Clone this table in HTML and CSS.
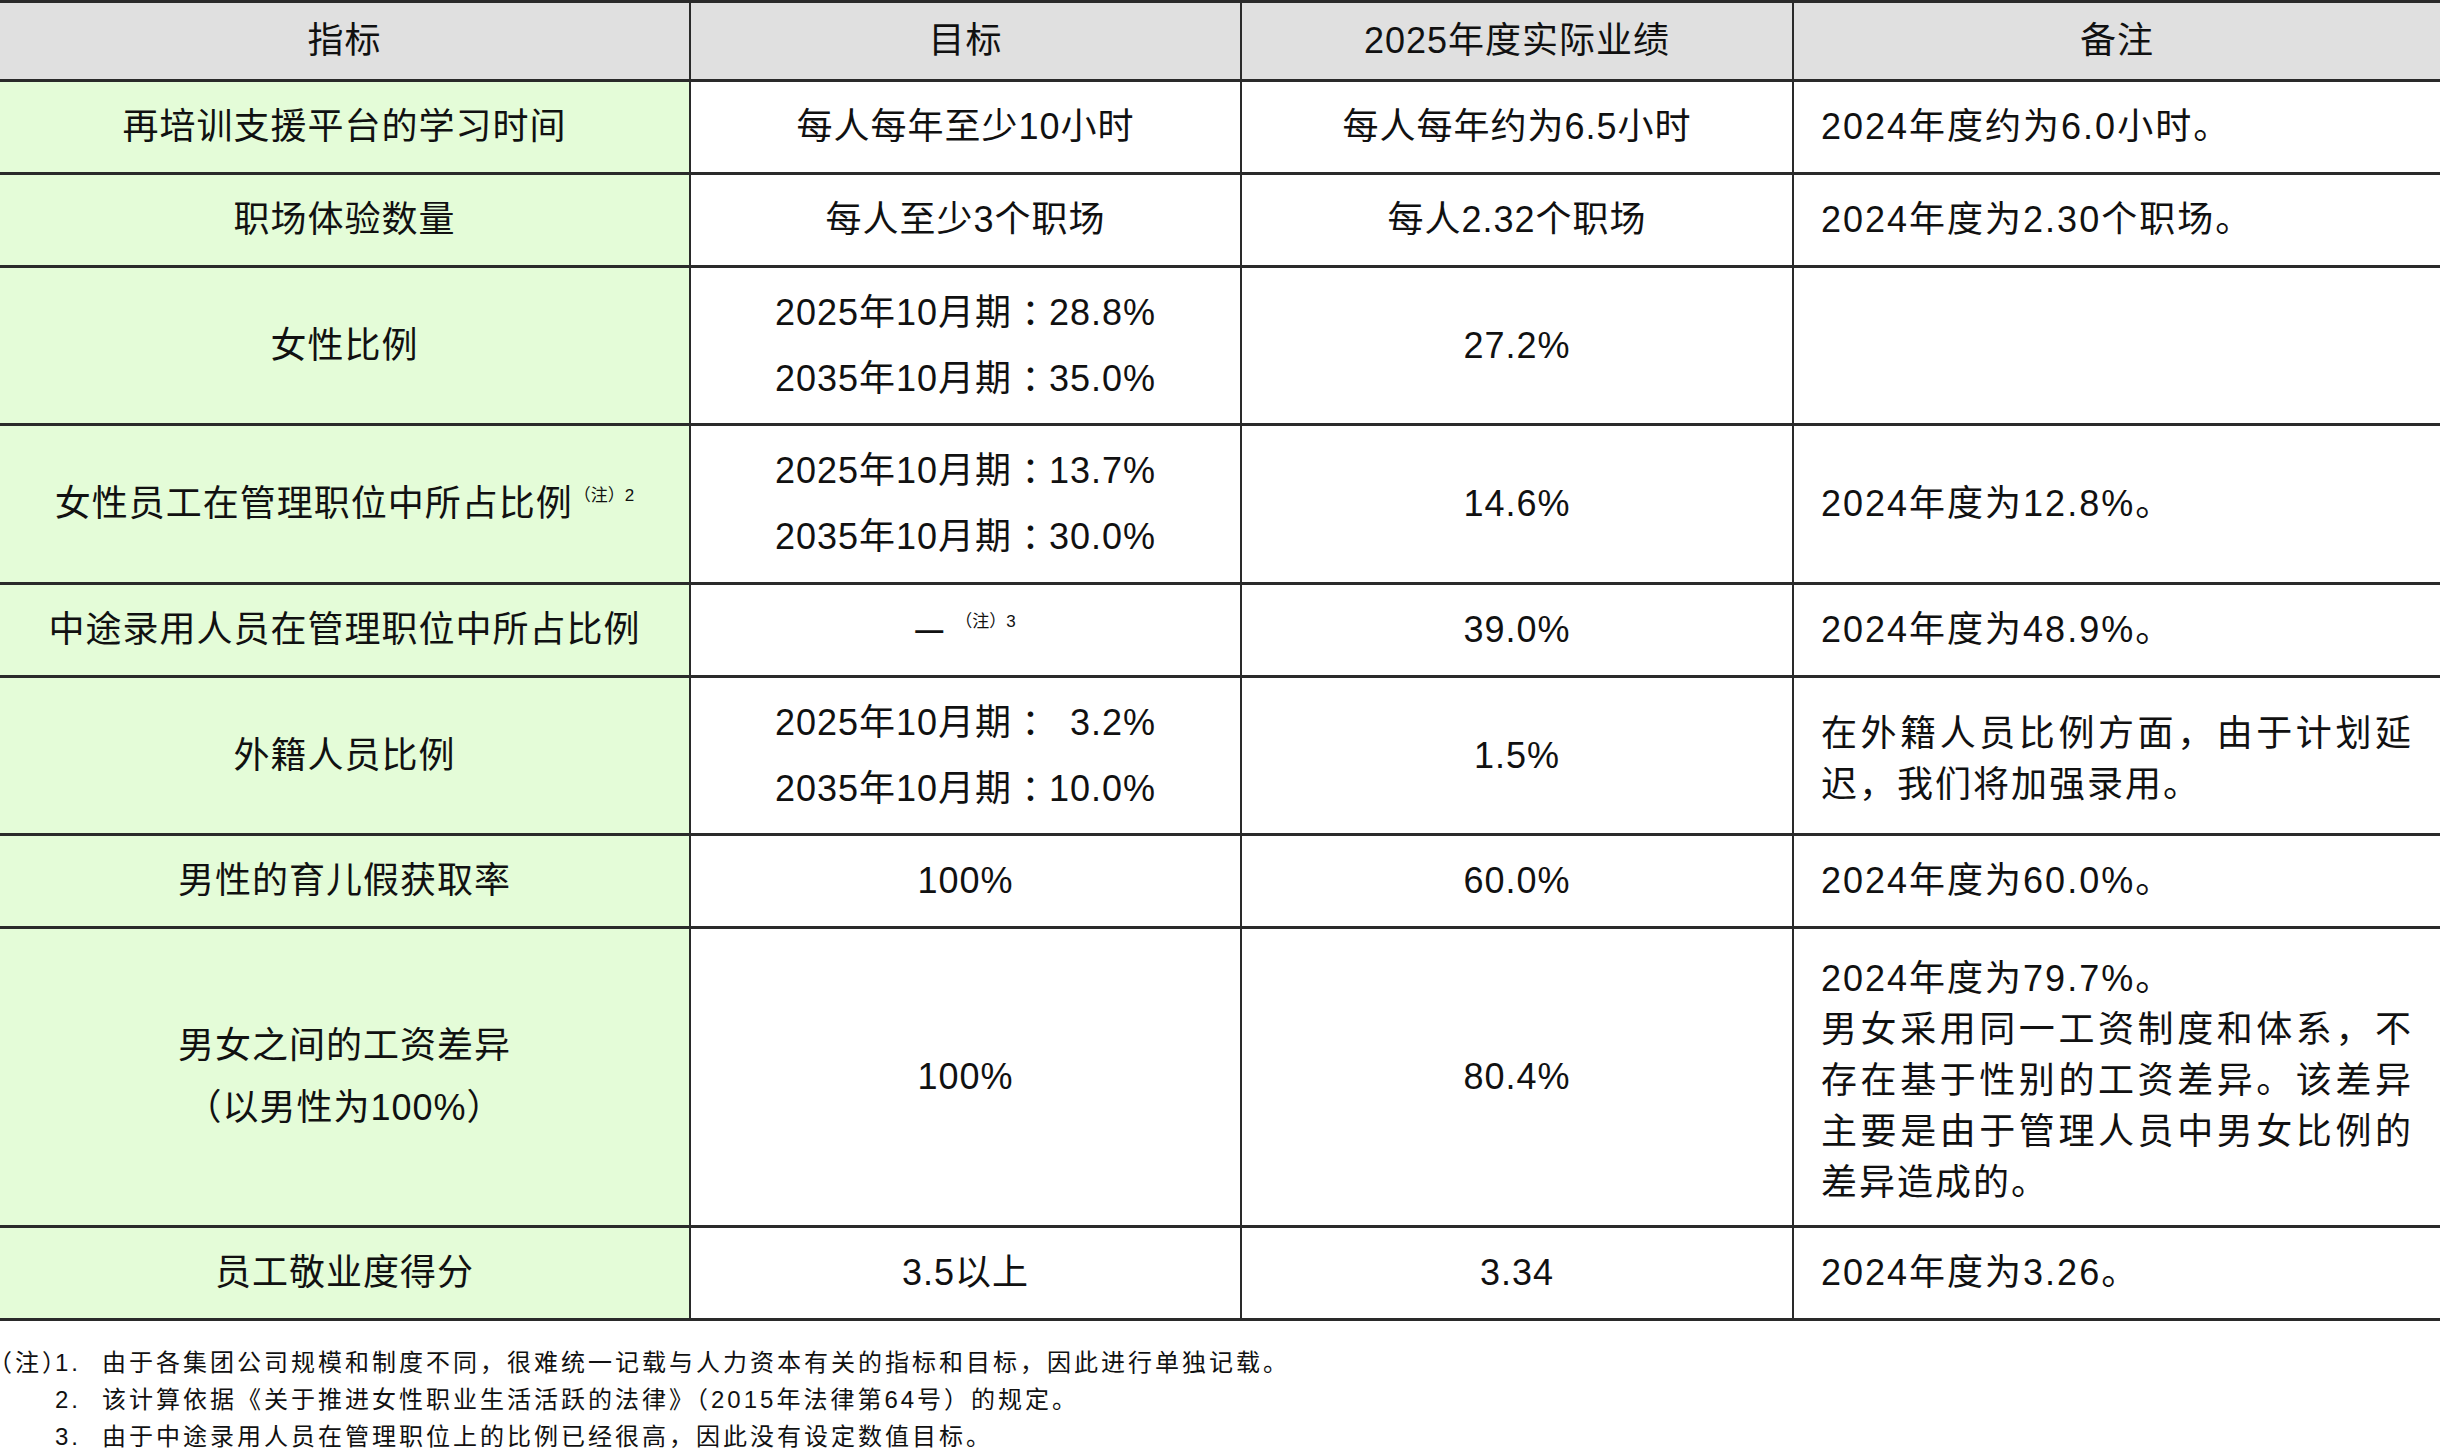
FILE: index.html
```html
<!DOCTYPE html>
<html lang="zh-CN">
<head>
<meta charset="utf-8">
<title>人力资本指标与目标</title>
<link rel="stylesheet" href="styles.css">
</head>
<body>
<div class="kpi-table">
  <div class="cell head">指标</div>
  <div class="cell head val">目标</div>
  <div class="cell head val">2025年度实际业绩</div>
  <div class="cell head val">备注</div>

  <div class="cell ind">再培训支援平台的学习时间</div>
  <div class="cell val">每人每年至少10小时</div>
  <div class="cell val">每人每年约为6.5小时</div>
  <div class="cell val note">2024年度约为6.0小时。</div>

  <div class="cell ind">职场体验数量</div>
  <div class="cell val">每人至少3个职场</div>
  <div class="cell val">每人2.32个职场</div>
  <div class="cell val note">2024年度为2.30个职场。</div>

  <div class="cell ind">女性比例</div>
  <div class="cell val">
    <div class="tline">2025年10月期<span class="colon">：</span>28.8%</div>
    <div class="tline">2035年10月期<span class="colon">：</span>35.0%</div>
  </div>
  <div class="cell val">27.2%</div>
  <div class="cell val note"></div>

  <div class="cell ind">
    <div>女性员工在管理职位中所占比例<span class="ref">（注）2</span></div>
  </div>
  <div class="cell val">
    <div class="tline">2025年10月期<span class="colon">：</span>13.7%</div>
    <div class="tline">2035年10月期<span class="colon">：</span>30.0%</div>
  </div>
  <div class="cell val">14.6%</div>
  <div class="cell val note">2024年度为12.8%。</div>

  <div class="cell ind">中途录用人员在管理职位中所占比例</div>
  <div class="cell val">
    <div><span class="dash">—</span><span class="ref gap">（注）3</span></div>
  </div>
  <div class="cell val">39.0%</div>
  <div class="cell val note">2024年度为48.9%。</div>

  <div class="cell ind">外籍人员比例</div>
  <div class="cell val">
    <div class="tline">2025年10月期<span class="colon">：</span><span class="fig"></span>3.2%</div>
    <div class="tline">2035年10月期<span class="colon">：</span>10.0%</div>
  </div>
  <div class="cell val">1.5%</div>
  <div class="cell val note multi">在外籍人员比例方面，由于计划延迟，我们将加强录用。</div>

  <div class="cell ind">男性的育儿假获取率</div>
  <div class="cell val">100%</div>
  <div class="cell val">60.0%</div>
  <div class="cell val note">2024年度为60.0%。</div>

  <div class="cell ind">
    <div class="iline">男女之间的工资差异</div>
    <div class="iline">（以男性为100%）</div>
  </div>
  <div class="cell val">100%</div>
  <div class="cell val">80.4%</div>
  <div class="cell val note multi">2024年度为79.7%。<br>男女采用同一工资制度和体系，不存在基于性别的工资差异。该差异主要是由于管理人员中男女比例的差异造成的。</div>

  <div class="cell ind">员工敬业度得分</div>
  <div class="cell val">3.5以上</div>
  <div class="cell val">3.34</div>
  <div class="cell val note">2024年度为3.26。</div>
</div>

<div class="footnotes">
  <div class="fn-label">（注）</div>
  <div class="fn-num">1.</div>
  <div class="fn-text">由于各集团公司规模和制度不同，很难统一记载与人力资本有关的指标和目标，因此进行单独记载。</div>
  <div class="fn-label"></div>
  <div class="fn-num">2.</div>
  <div class="fn-text">该计算依据《关于推进女性职业生活活跃的法律》（2015年法律第64号）的规定。</div>
  <div class="fn-label"></div>
  <div class="fn-num">3.</div>
  <div class="fn-text">由于中途录用人员在管理职位上的比例已经很高，因此没有设定数值目标。</div>
</div>
</body>
</html>
```

FILE: styles.css
```css
html, body {
  margin: 0;
  padding: 0;
  background: #ffffff;
}

body {
  width: 2440px;
  font-family: "Liberation Sans", "Noto Sans CJK SC", sans-serif;
  color: #111111;
}

.kpi-table {
  display: grid;
  grid-template-columns: 689px 551px 552px 648px;
  grid-template-rows: 79px 93px 93px 158px 159px 93px 158px 93px 299px 93px;
  border-bottom: 3px solid #2a2a2a;
  font-size: 36px;
  letter-spacing: 1px;
}

.cell {
  box-sizing: border-box;
  border-top: 3px solid #2a2a2a;
  display: flex;
  flex-direction: column;
  justify-content: center;
  align-items: center;
  text-align: center;
  line-height: 44px;
  background: #ffffff;
  white-space: nowrap;
}

.val {
  border-left: 2px solid #2a2a2a;
}

.head {
  background: #e0e0e0;
}

.ind {
  background: #e4fcd8;
}

.tline {
  line-height: 66px;
}

.iline {
  line-height: 62px;
}

.colon {
  display: inline-block;
  width: 37px;
  text-align: center;
  letter-spacing: 0;
  font-feature-settings: "halt";
}

.fig {
  display: inline-block;
  width: 21px;
}

.note {
  align-items: stretch;
  text-align: justify;
  padding: 0 27px;
  letter-spacing: 2px;
  white-space: normal;
}

.note.multi {
  line-height: 51px;
  padding-top: 6px;
}

.ref {
  font-size: 17px;
  line-height: 1;
  letter-spacing: 0;
  vertical-align: 15px;
  margin-left: 1px;
}

.ref.gap {
  margin-left: 12px;
}

.dash {
  font-family: "Liberation Sans", sans-serif;
  font-size: 28px;
  font-weight: 700;
  letter-spacing: 0;
  vertical-align: 3px;
}

.footnotes {
  display: grid;
  grid-template-columns: 55px 47px 1fr;
  margin-top: 23px;
  font-size: 24px;
  line-height: 37px;
  letter-spacing: 3px;
  white-space: nowrap;
}

.fn-label {
  font-feature-settings: "halt";
}
```
